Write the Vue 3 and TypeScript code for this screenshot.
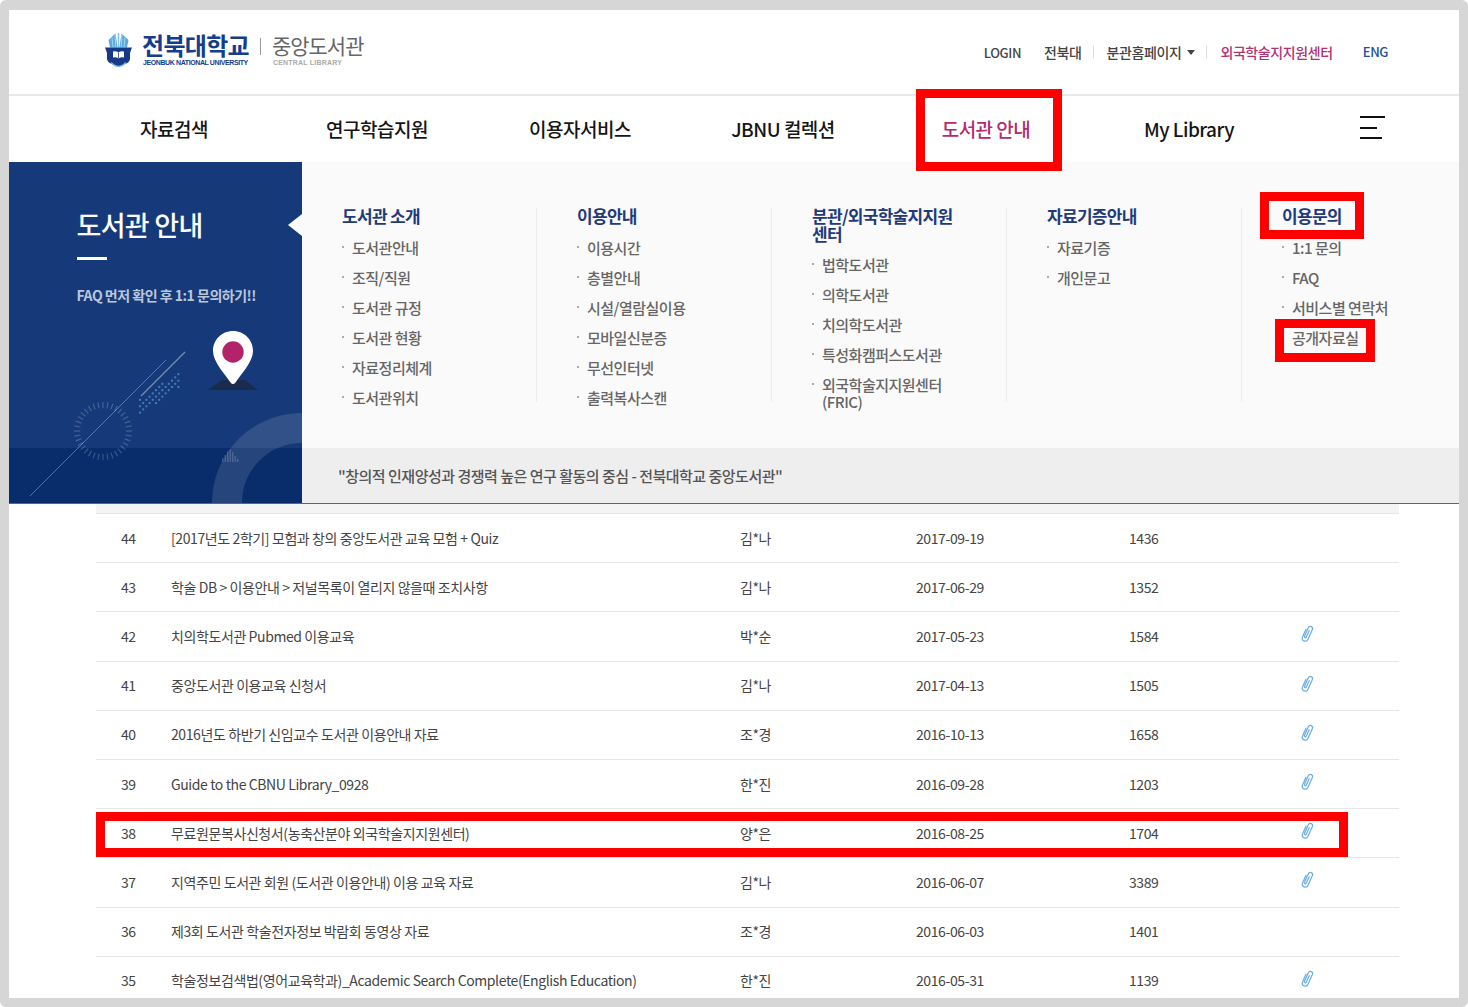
<script setup lang="ts">
interface Row { no: number; title: string; writer: string; date: string; hits: number; clip: boolean }
interface Col { heading: string; items: string[]; wide?: boolean }

const navItems = ['자료검색', '연구학습지원', '이용자서비스', 'JBNU 컬렉션', '도서관 안내', 'My Library']

const cols: Col[] = [
  { heading: '도서관 소개', items: ['도서관안내', '조직/직원', '도서관 규정', '도서관 현황', '자료정리체계', '도서관위치'] },
  { heading: '이용안내', items: ['이용시간', '층별안내', '시설/열람실이용', '모바일신분증', '무선인터넷', '출력복사스캔'] },
  { heading: '분관/외국학술지지원센터', items: ['법학도서관', '의학도서관', '치의학도서관', '특성화캠퍼스도서관', '외국학술지지원센터 (FRIC)'], wide: true },
  { heading: '자료기증안내', items: ['자료기증', '개인문고'] },
  { heading: '이용문의', items: ['1:1 문의', 'FAQ', '서비스별 연락처', '공개자료실'] }
]

const rows: Row[] = [
  { no: 44, title: '[2017년도 2학기] 모험과 창의 중앙도서관 교육 모험 + Quiz', writer: '김*나', date: '2017-09-19', hits: 1436, clip: false },
  { no: 43, title: '학술 DB > 이용안내 > 저널목록이 열리지 않을때 조치사항', writer: '김*나', date: '2017-06-29', hits: 1352, clip: false },
  { no: 42, title: '치의학도서관 Pubmed 이용교육', writer: '박*순', date: '2017-05-23', hits: 1584, clip: true },
  { no: 41, title: '중앙도서관 이용교육 신청서', writer: '김*나', date: '2017-04-13', hits: 1505, clip: true },
  { no: 40, title: '2016년도 하반기 신임교수 도서관 이용안내 자료', writer: '조*경', date: '2016-10-13', hits: 1658, clip: true },
  { no: 39, title: 'Guide to the CBNU Library_0928', writer: '한*진', date: '2016-09-28', hits: 1203, clip: true },
  { no: 38, title: '무료원문복사신청서(농축산분야 외국학술지지원센터)', writer: '양*은', date: '2016-08-25', hits: 1704, clip: true },
  { no: 37, title: '지역주민 도서관 회원 (도서관 이용안내) 이용 교육 자료', writer: '김*나', date: '2016-06-07', hits: 3389, clip: true },
  { no: 36, title: '제3회 도서관 학술전자정보 박람회 동영상 자료', writer: '조*경', date: '2016-06-03', hits: 1401, clip: false },
  { no: 35, title: '학술정보검색법(영어교육학과)_Academic Search Complete(English Education)', writer: '한*진', date: '2016-05-31', hits: 1139, clip: true }
]

const ticks = Array.from({ length: 36 }, (_, i) => {
  const a = (i / 36) * Math.PI * 2
  const r1 = 23
  const r2 = 29
  return {
    x1: 94 + r1 * Math.cos(a),
    y1: 269 + r1 * Math.sin(a),
    x2: 94 + r2 * Math.cos(a),
    y2: 269 + r2 * Math.sin(a)
  }
})

const dots: { x: number; y: number }[] = []
for (let k = 0; k < 13; k++) {
  const cy = 244 - 2.3 * k
  for (let r = -2; r <= 2; r++) {
    const row = Math.round(cy / 3.2) + r
    if ((k + row) % 2 === 0) dots.push({ x: 130 + 3.2 * k, y: row * 3.2 })
  }
}

const bars = [
  { x: 213, h: 4 }, { x: 215.5, h: 7 }, { x: 218, h: 11 }, { x: 220.5, h: 13 }, { x: 223, h: 10 }, { x: 225.5, h: 6 }, { x: 228, h: 3 }
]
</script>

<template>
  <div class="frame">
    <header class="top">
      <div class="logo">
        <svg class="emblem" viewBox="0 0 27 36" width="27" height="36">
          <path d="M10.5 0.5 L12.6 14.5 H5 L3.5 7 Z M16.5 0.5 L14.4 14.5 H22 L23.5 7 Z" fill="#58a9e0" />
          <path d="M13.5 0 V14.5" stroke="#8cc7ec" stroke-width="1.6" />
          <path d="M7 4.5 L8 14.5 M10 2 L10.8 14.5 M20 4.5 L19 14.5 M17 2 L16.2 14.5" stroke="#ffffff" stroke-width="0.5" />
          <path d="M0 14.5 H27 L25 20 V26 Q24.5 30 18.5 31.5 L13.5 33.5 L8.5 31.5 Q2.5 30 2 26 V20 Z" fill="#163a86" />
          <path d="M8 18.5 Q11 17.5 13.5 19.5 Q16 17.5 19 18.5 V24.5 Q16 23.5 13.5 25.5 Q11 23.5 8 24.5 Z" fill="#ffffff" />
          <path d="M13.5 19.5 V25.5" stroke="#163a86" stroke-width="0.8" />
          <path d="M6 29.5 Q13.5 37 21 29.5" fill="none" stroke="#5fb0e2" stroke-width="1.1" />
        </svg>
        <div class="logo-uni">
          <strong>전북대학교</strong>
          <span>JEONBUK NATIONAL UNIVERSITY</span>
        </div>
        <i class="logo-sep"></i>
        <div class="logo-lib">
          <strong>중앙도서관</strong>
          <span>CENTRAL LIBRARY</span>
        </div>
      </div>
      <nav class="util">
        <a class="login">LOGIN</a>
        <a class="u-a">전북대</a>
        <i class="u-sep"></i>
        <a class="u-b">분관홈페이지<b class="caret"></b></a>
        <i class="u-sep s2"></i>
        <a class="u-c">외국학술지지원센터</a>
        <a class="eng">ENG</a>
      </nav>
    </header>

    <nav class="gnb">
      <a v-for="n in navItems" :key="n" :class="{ on: n === '도서관 안내' }">{{ n }}</a>
      <div class="burger"><i></i><i></i><i></i></div>
    </nav>

    <section class="panel">
      <aside class="side">
        <svg class="deco" viewBox="0 0 293 341" width="293" height="341">
          <rect x="0" y="286" width="293" height="55" fill="#00205f" fill-opacity="0.55" />
          <circle cx="293" cy="341" r="75" fill="none" stroke="#ffffff" stroke-opacity="0.12" stroke-width="30" />
          <line v-for="(t, i) in ticks" :key="i" :x1="t.x1" :y1="t.y1" :x2="t.x2" :y2="t.y2" stroke="#ffffff" stroke-opacity="0.2" stroke-width="1.2" />
          <line x1="21" y1="334" x2="157" y2="198" stroke="#ffffff" stroke-opacity="0.32" stroke-width="1" />
          <line x1="132" y1="234" x2="176" y2="190" stroke="#ffffff" stroke-opacity="0.42" stroke-width="1.2" />
          <rect v-for="(d, i) in dots" :key="'d' + i" :x="d.x" :y="d.y" width="2" height="2" fill="#4d8fc0" fill-opacity="0.8" />
          <rect v-for="b in bars" :key="b.x" :x="b.x" :y="300 - b.h" width="1.4" :height="b.h" fill="#ffffff" fill-opacity="0.18" />
          <path d="M213 218 H236 L249 228 H199 Z" fill="#1a2b4e" />
          <path d="M224 169 C212.5 169 204 178 204 189 C204 200 216 212 221.5 220.5 Q224 223.5 226.5 220.5 C232 212 244 200 244 189 C244 178 235.5 169 224 169 Z" fill="#ffffff" />
          <circle cx="224" cy="190" r="10.7" fill="#b3236a" />
        </svg>
        <i class="notch"></i>
        <h2>도서관 안내</h2>
        <i class="bar"></i>
        <p>FAQ 먼저 확인 후 1:1 문의하기!!</p>
      </aside>
      <div class="main">
        <div class="menu">
          <div v-for="c in cols" :key="c.heading" class="col">
            <h3 :class="{ narrow: c.wide }">{{ c.heading }}</h3>
            <ul>
              <li v-for="it in c.items" :key="it" :class="{ two: it.includes('FRIC') }">{{ it }}</li>
            </ul>
          </div>
        </div>
        <div class="quote">"창의적 인재양성과 경쟁력 높은 연구 활동의 중심 - 전북대학교 중앙도서관"</div>
      </div>
    </section>

    <section class="table">
      <div class="strip"></div>
      <div v-for="r in rows" :key="r.no" class="row">
        <span class="c-no">{{ r.no }}</span>
        <span class="c-title">{{ r.title }}</span>
        <span>{{ r.writer }}</span>
        <span>{{ r.date }}</span>
        <span>{{ r.hits }}</span>
        <span class="c-clip">
          <svg v-if="r.clip" viewBox="0 0 14 18" width="16" height="20">
            <g transform="rotate(24 7 9)">
              <path d="M4.4 5.5 V13 A2.7 2.7 0 0 0 9.8 13 V3.4 A2 2 0 0 0 5.8 3.4 V11.8 A0.9 0.9 0 0 0 7.6 11.8 V5.5" fill="none" stroke="#6aaee6" stroke-width="1.1" stroke-linecap="round" />
            </g>
          </svg>
        </span>
      </div>
    </section>

    <i class="mark m1"></i>
    <i class="mark m2"></i>
    <i class="mark m3"></i>
    <i class="mark m4"></i>
  </div>
</template>

<style>
html, body { margin: 0; background: #ffffff; }
</style>

<style scoped>
.frame {
  position: relative;
  box-sizing: border-box;
  width: 1468px;
  height: 1007px;
  overflow: hidden;
  border-style: solid;
  border-color: #d6d6d6;
  border-width: 10px 9px 9px 9px;
  border-radius: 6px;
  background: #ffffff;
  font-family: "Noto Sans CJK KR", "Noto Sans", sans-serif;
  letter-spacing: -0.5px;
  color: #444;
  font-size: 14px;
}
i { display: block; font-style: normal; }
a { display: block; }

.top {
  box-sizing: border-box;
  height: 86px;
  border-bottom: 2px solid #e9e9e9;
  display: flex;
  justify-content: space-between;
  padding: 0 71px 0 96px;
}
.logo { display: flex; align-items: flex-start; padding-top: 23px; }
.emblem { display: block; }
.logo-uni, .logo-lib { display: flex; flex-direction: column; }
.logo-uni { margin-left: 10px; margin-top: -1px; }
.logo-uni strong {
  font-size: 24px; line-height: 26px; font-weight: 700; color: #163c8c; letter-spacing: -0.7px;
}
.logo-uni span {
  font-size: 7px; line-height: 9px; font-weight: 700; color: #163c8c; letter-spacing: -0.4px; font-family: "Liberation Sans", sans-serif; margin-top: 0; margin-left: 1px;
}
.logo-sep { width: 1px; height: 17px; background: #999; margin: 5px 11px 0 11px; }
.logo-lib { margin-top: -1px; }
.logo-lib strong {
  font-size: 21px; line-height: 26px; font-weight: 400; color: #666; letter-spacing: -1px;
}
.logo-lib span {
  font-size: 7px; line-height: 9px; font-weight: 700; color: #aaa; letter-spacing: 0.2px; font-family: "Liberation Sans", sans-serif; margin-left: 1px;
}
.util { display: flex; align-items: flex-start; padding-top: 33px; font-size: 14px; line-height: 18px; color: #444; letter-spacing: -0.4px; font-weight: 500; }
.login { margin-right: 23px; margin-top: 1px; font-size: 13px; }
.u-sep { width: 1px; height: 12px; background: #ddd; margin: 3px 13px 0 11px; }
.u-b { display: flex; align-items: center; }
.caret { display: block; width: 0; height: 0; border: 4.5px solid transparent; border-top: 5px solid #444; border-bottom: 0; margin-left: 6px; }
.u-c { color: #b0326f; }
.eng { color: #1d4f9c; margin-left: 30px; font-size: 13px; }

.gnb {
  position: relative;
  height: 66px;
  padding-left: 63.5px;
  display: flex;
  align-items: center;
}
.gnb a {
  width: 203px;
  text-align: center;
  font-size: 19px;
  font-weight: 500;
  color: #151515;
  letter-spacing: -0.5px;
  line-height: 24px;
  margin-top: -1px;
}
.gnb a.on { color: #b5296d; }
.burger {
  position: absolute;
  left: 1351px;
  top: 20px;
  width: 26px;
  height: 23px;
  display: flex;
  flex-direction: column;
  justify-content: space-between;
}
.burger i { height: 2px; background: #111; width: 25px; }
.burger i:nth-child(2) { width: 17px; }
.burger i:nth-child(3) { width: 22px; }

.panel {
  display: flex;
  height: 342px;
  border-bottom: 1px solid #666;
  box-sizing: border-box;
}
.side {
  position: relative;
  width: 293px;
  flex: none;
  background: #163a79;
  overflow: hidden;
  padding: 41px 0 0 67.5px;
  box-sizing: border-box;
}
.deco { position: absolute; left: 0; top: 0; }
.notch {
  position: absolute;
  right: 0;
  top: 52px;
  width: 0;
  height: 0;
  border-style: solid;
  border-width: 11px 14px 11px 0;
  border-color: transparent #fafafa transparent transparent;
}
.side h2 {
  position: relative;
  margin: 0;
  font-size: 27px;
  line-height: 44px;
  font-weight: 500;
  color: #fff;
  letter-spacing: -0.7px;
}
.bar { position: relative; width: 30px; height: 3px; background: #fff; margin-top: 10px; }
.side p {
  position: relative;
  margin: 25px 0 0;
  font-size: 14px;
  line-height: 20px;
  font-weight: 700;
  color: #bcc6da;
  letter-spacing: -0.5px;
}
.main { flex: 1; display: flex; flex-direction: column; background: #fafafa; }
.menu { flex: 1; display: flex; align-items: flex-start; padding-top: 46px; box-sizing: border-box; }
.col {
  box-sizing: border-box;
  width: 235px;
  height: 194px;
  padding-left: 40px;
  border-right: 1px solid #ececec;
}
.col:last-child { border-right: 0; }
.col h3 {
  margin: -1px 0 7px;
  font-size: 17px;
  line-height: 18px;
  font-weight: 700;
  color: #1f3b7a;
  letter-spacing: -0.7px;
}
.col h3.narrow { width: 150px; margin-bottom: 6px; }
.col ul { list-style: none; margin: 0; padding: 0; }
.col li {
  position: relative;
  padding: 6.5px 0 6.5px 10px;
  font-size: 15px;
  line-height: 17px;
  color: #666;
  font-weight: 500;
  letter-spacing: -0.5px;
  width: 140px;
}
.col li::before {
  content: "";
  position: absolute;
  left: 0;
  top: 14px;
  width: 2px;
  height: 2px;
  background: #aaa;
}
.quote {
  height: 55px;
  flex: none;
  box-sizing: border-box;
  background: #eeeeee;
  padding: 0 0 0 36px;
  line-height: 56px;
  font-size: 15px;
  font-weight: 500;
  color: #555;
  letter-spacing: -0.5px;
}

.table { margin: 0 60px 0 87px; }
.strip { height: 9px; background: #f4f4f4; border-bottom: 1px solid #e6e6e6; }
.row {
  display: grid;
  grid-template-columns: 75px 569px 176px 213px 150px 56px;
  align-items: center;
  height: 49.2px;
  box-sizing: border-box;
  border-bottom: 1px solid #e6e6e6;
  font-size: 14px;
  color: #444;
  letter-spacing: -0.4px;
  padding-bottom: 1px;
}
.c-no { padding-left: 25px; }
.c-clip { display: flex; justify-content: center; margin-top: -3px; height: 20px; }
.c-clip svg { display: block; }

.mark { position: absolute; box-sizing: border-box; border: 9px solid #ff0000; }
.m1 { left: 907px; top: 79px; width: 146px; height: 82px; }
.m2 { left: 1251px; top: 182px; width: 104px; height: 47px; }
.m3 { left: 1266px; top: 309px; width: 100px; height: 43px; }
.m4 { left: 87px; top: 802px; width: 1252px; height: 45px; }
</style>
